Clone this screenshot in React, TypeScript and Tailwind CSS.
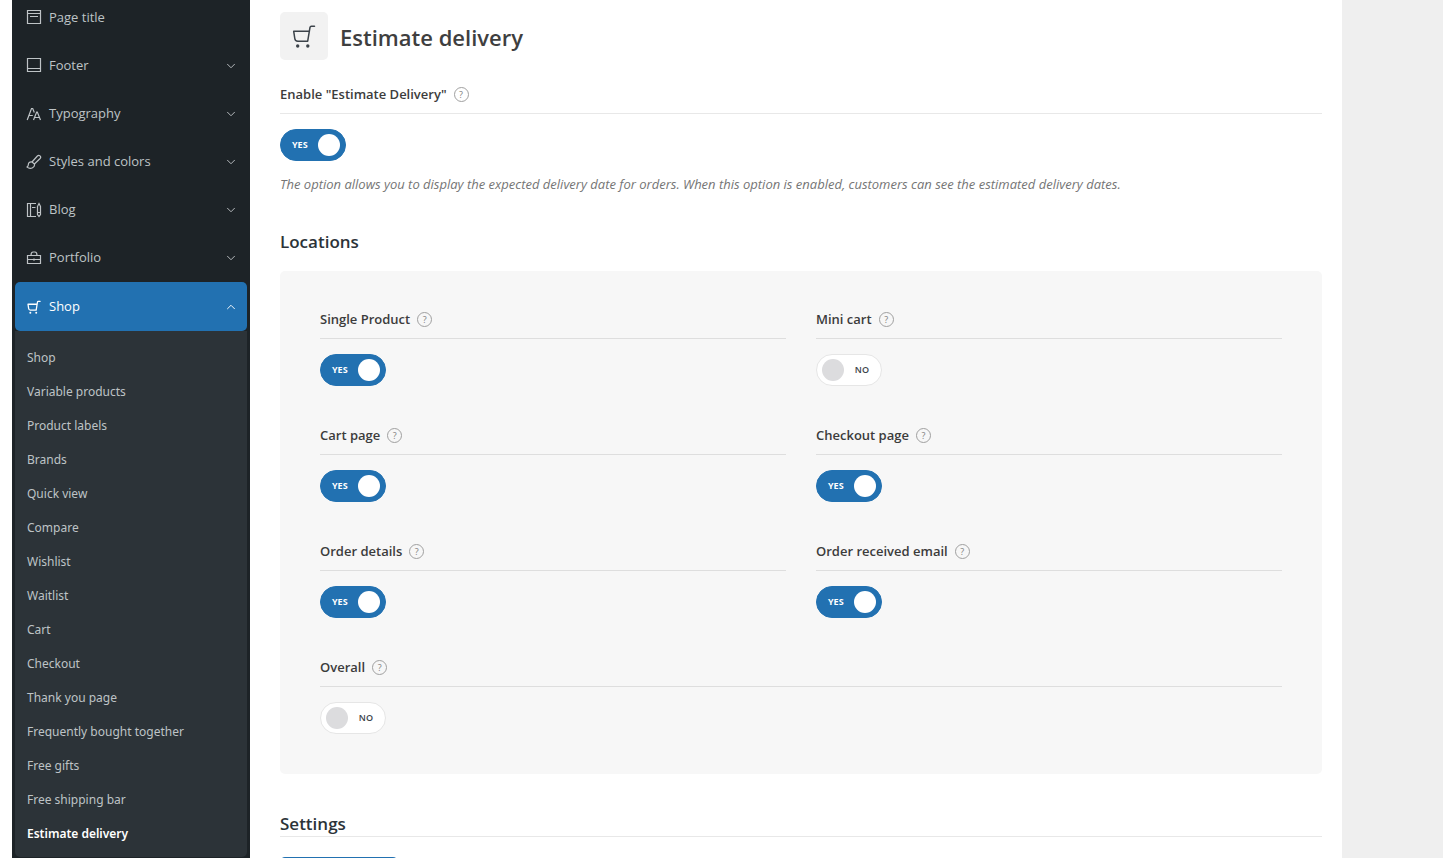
import { useId, useState, type ReactNode } from "react";
import { ChevronDown, ChevronUp } from "lucide-react";
import clsx from "clsx";

function Icon({ children }: { children: ReactNode }) {
  return (
    <svg
      viewBox="0 0 16 16"
      className="size-4 shrink-0"
      fill="none"
      stroke="currentColor"
      strokeWidth="1.2"
      aria-hidden="true"
    >
      {children}
    </svg>
  );
}

function CartIcon({ className }: { className?: string }) {
  return (
    <svg
      viewBox="0 0 24 24"
      className={clsx("shrink-0", className)}
      fill="none"
      stroke="currentColor"
      strokeLinejoin="round"
      strokeLinecap="round"
      aria-hidden="true"
    >
      <path d="M17.4 7.3H1.7l1.1 7.2a3 3 0 0 0 3 2.700h9.900L18 3.400q.2-1.200 1.400-1.200h3.100" />
      <circle cx="5.700" cy="22" r="1.700" fill="currentColor" stroke="none" />
      <circle cx="15.800" cy="22" r="1.700" fill="currentColor" stroke="none" />
    </svg>
  );
}

const menu = [
  {
    label: "Page title",
    expandable: false,
    icon: (
      <Icon>
        <path d="M1.5 .5h13v13h-13zM1.5 3.5h13M4 6.5h8" />
      </Icon>
    ),
  },
  {
    label: "Footer",
    expandable: true,
    icon: (
      <Icon>
        <path d="M1.5 .5h13v13h-13zM1.5 10.5h13" />
      </Icon>
    ),
  },
  {
    label: "Typography",
    expandable: true,
    icon: (
      <Icon>
        <path d="M1.2 14 5.5 2.5h1.200l1.600 4M2.800 9.500h4M7.500 14l3.200-8h.6l3.200 8M8.700 11.500h4.800" />
      </Icon>
    ),
  },
  {
    label: "Styles and colors",
    expandable: true,
    icon: (
      <Icon>
        <path d="M6 8 11.4 2a1.800 1.800 0 0 1 2.700 2.500L8.400 10M6 8l2.400 2M6 8C3.500 7.600 2.300 9 2.300 10.800c0 1.200-.4 1.700-1.200 2.300 1.500 1.200 3.900 1.400 5.500.6 1.600-.8 2.200-2.200 1.800-3.700" />
      </Icon>
    ),
  },
  {
    label: "Blog",
    expandable: true,
    icon: (
      <Icon>
        <path d="M10 1.500H1.500v13H10M4.500 1.500v13M6 5.500h3.500M11.500 4.500 13 1.500l1.500 3v8L13 14.500l-1.500-2zM11.500 10.500h3" />
      </Icon>
    ),
  },
  {
    label: "Portfolio",
    expandable: true,
    icon: (
      <Icon>
        <path d="M1.500 5.500h13v8h-13zM5 5.500q0-3.500 2-3.500h2q2 0 2 3.500M1.500 9.500h13M8 8.500v2.200" />
      </Icon>
    ),
  },
];

const shopPages = [
  "Shop",
  "Variable products",
  "Product labels",
  "Brands",
  "Quick view",
  "Compare",
  "Wishlist",
  "Waitlist",
  "Cart",
  "Checkout",
  "Thank you page",
  "Frequently bought together",
  "Free gifts",
  "Free shipping bar",
  "Estimate delivery",
];

const locations = [
  { label: "Single Product", enabled: true },
  { label: "Mini cart", enabled: false },
  { label: "Cart page", enabled: true },
  { label: "Checkout page", enabled: true },
  { label: "Order details", enabled: true },
  { label: "Order received email", enabled: true },
  { label: "Overall", enabled: false, wide: true },
];

function Sidebar() {
  return (
    <nav className="w-[238px] shrink-0 bg-[#1d2327] px-[3px] text-[#bec3c6]">
      <ul className="-mt-[6px]">
        {menu.map((item) => (
          <li key={item.label}>
            <a href="#" className="flex h-12 items-center gap-[7px] pr-[9px] pl-[11px] text-[13px]">
              {item.icon}
              <span className="flex-1">{item.label}</span>
              {item.expandable && <ChevronDown className="size-[14px]" strokeWidth={1.6} />}
            </a>
          </li>
        ))}
        <li>
          <a
            href="#"
            className="flex h-[49px] items-center gap-[7px] rounded-[5px] bg-[#2271b1] pr-[9px] pl-[11px] text-[13px] text-white"
          >
            <CartIcon className="size-4 stroke-[2.2] p-px" />
            <span className="flex-1">Shop</span>
            <ChevronUp className="size-[14px]" strokeWidth={1.6} />
          </a>
          <ul className="rounded-b-[5px] bg-[#2c3338] pt-[10px] pb-[6px] font-['Noto_Sans','Open_Sans',sans-serif] text-[12px]">
            {shopPages.map((page) => (
              <li key={page}>
                <a
                  href="#"
                  className={clsx(
                    "flex h-[34px] items-center px-3",
                    page === "Estimate delivery" && "font-semibold text-white"
                  )}
                >
                  {page}
                </a>
              </li>
            ))}
          </ul>
        </li>
      </ul>
    </nav>
  );
}

function SwitchField({
  label,
  enabled,
  panel = false,
  className,
}: {
  label: string;
  enabled: boolean;
  panel?: boolean;
  className?: string;
}) {
  const id = useId();
  const [on, setOn] = useState(enabled);
  return (
    <div className={className}>
      <div
        className={clsx(
          "mb-[15px] flex items-center gap-[7px] border-b pb-[11px]",
          panel ? "border-[#dedede]" : "border-[#e8e8e8]"
        )}
      >
        <label htmlFor={id} className="text-[13px] leading-4 font-semibold text-[#3c3c3c]">
          {label}
        </label>
        <button
          type="button"
          aria-label={`Help: ${label}`}
          className="flex size-[15px] items-center justify-center rounded-full border border-[#a0a0a0] text-[9px] leading-none text-[#808080]"
        >
          ?
        </button>
      </div>
      <label
        className={clsx(
          "flex h-8 w-[66px] cursor-pointer items-center justify-between rounded-full border px-[5px] text-[9px]",
          on ? "border-[#2271b1] bg-[#2271b1] text-white" : "flex-row-reverse border-[#e6e6e6] bg-white text-[#3c434a]"
        )}
      >
        <input
          id={id}
          type="checkbox"
          className="sr-only"
          checked={on}
          onChange={(e) => setOn(e.target.checked)}
        />
        <span className={on ? "pl-[6px] font-bold" : "pr-[7px] font-semibold"}>{on ? "YES" : "NO"}</span>
        <span className={clsx("size-[22px] rounded-full", on ? "bg-white" : "bg-[#dcdcde]")} />
      </label>
    </div>
  );
}

export default function App() {
  return (
    <div className="h-screen overflow-hidden bg-[#efefef] font-['Open_Sans','Noto_Sans',sans-serif]">
      <div className="flex min-h-full max-w-[1342px] bg-white pl-3">
        <Sidebar />
        <main className="min-w-0 flex-1 px-[30px] pt-3 pr-5">
          <header className="mb-[26px] flex items-center gap-3">
            <span className="flex size-12 items-center justify-center rounded-[5px] bg-[#f2f2f2] text-[#3c434a]">
              <CartIcon className="size-6 stroke-[1.5]" />
            </span>
            <h1 className="pt-0.5 text-[22px] leading-8 font-semibold text-[#3f3f3f]">Estimate delivery</h1>
          </header>

          <SwitchField label={'Enable "Estimate Delivery"'} enabled />
          <p className="mt-[14px] text-[13px] leading-[18px] text-[#757575] italic">
            The option allows you to display the expected delivery date for orders. When this option is enabled,
            customers can see the estimated delivery dates.
          </p>

          <h2 className="mt-[37px] text-[17px] leading-6 font-semibold text-[#2c3338]">Locations</h2>
          <section className="mt-[17px] grid grid-cols-2 gap-x-[30px] gap-y-[41px] rounded-[5px] bg-[#f7f7f7] p-10">
            {locations.map((item) => (
              <SwitchField
                key={item.label}
                label={item.label}
                enabled={item.enabled}
                panel
                className={item.wide ? "col-span-2" : undefined}
              />
            ))}
          </section>

          <h2 className="mt-[38px] border-b border-[#e8e8e8] text-[17px] leading-6 font-semibold text-[#2c3338]">
            Settings
          </h2>
          <button
            type="button"
            aria-label="Settings tab"
            className="mt-5 block h-9 w-[118px] rounded-[5px] bg-[#2271b1]"
          />
        </main>
      </div>
    </div>
  );
}
